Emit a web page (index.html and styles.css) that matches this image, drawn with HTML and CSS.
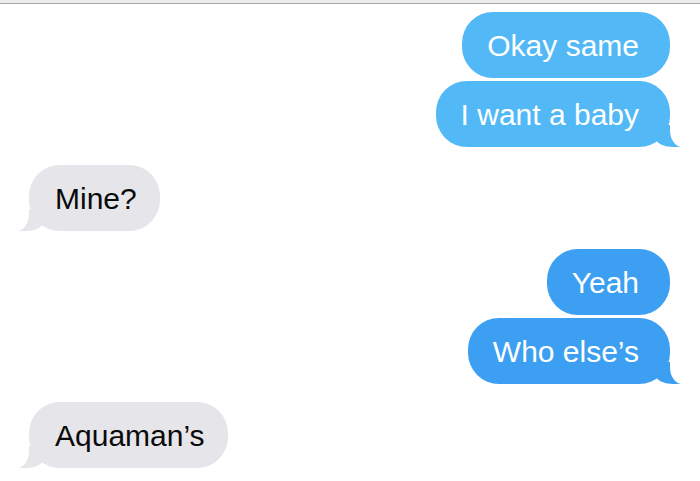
FILE: index.html
```html
<!DOCTYPE html>
<html>
<head>
    <meta charset="utf-8">
    <title>Messages</title>
    <link rel="stylesheet" href="styles.css">
</head>
<body>
    <div class="topbar"></div>
    <main class="thread">
        <div class="group sent">
            <p class="bubble top">Okay same</p>
            <p class="bubble top tail">I want a baby</p>
        </div>
        <div class="group received">
            <p class="bubble tail">Mine?</p>
        </div>
        <div class="group sent">
            <p class="bubble">Yeah</p>
            <p class="bubble tail">Who else’s</p>
        </div>
        <div class="group received">
            <p class="bubble tail">Aquaman’s</p>
        </div>
    </main>
</body>
</html>
```

FILE: styles.css
```css
body {
    margin: 0;
    padding: 0;
    background: #fff;
    font-family: "Liberation Sans", Arial, sans-serif;
}

.topbar {
    height: 3px;
    background: #ededed;
    border-bottom: 1px solid #a8a8a8;
}

.thread {
    display: flex;
    flex-direction: column;
    gap: 18px;
    padding: 8px 30px 0 29px;
}

.group {
    display: flex;
    flex-direction: column;
    gap: 3px;
}

.sent {
    align-items: flex-end;
}

.received {
    align-items: flex-start;
}

.bubble {
    position: relative;
    margin: 0;
    height: 66px;
    line-height: 68px;
    font-size: 30px;
    border-radius: 31px;
}

.sent .bubble {
    padding: 0 31px 0 25px;
    background: #3d9ff1;
    color: #fff;
}

.sent .bubble.top {
    background: #52b9f6;
}

.received .bubble {
    padding: 0 23px 0 26px;
    background: #e5e5ea;
    color: #0a0a0a;
}

/* the little tail on the last bubble of a group */
.tail::before,
.tail::after {
    content: "";
    position: absolute;
    bottom: 0;
    height: 22px;
}

.tail::before {
    width: 24px;
    background: inherit;
}

.tail::after {
    width: 28px;
    background: #fff;
}

.sent .tail::before {
    right: -10px;
    border-bottom-left-radius: 16px 9px;
}

.sent .tail::after {
    right: -28px;
    border-bottom-left-radius: 12px 17px;
}

.received .tail::before {
    left: -10px;
    border-bottom-right-radius: 16px 9px;
}

.received .tail::after {
    left: -28px;
    border-bottom-right-radius: 12px 17px;
}
```
